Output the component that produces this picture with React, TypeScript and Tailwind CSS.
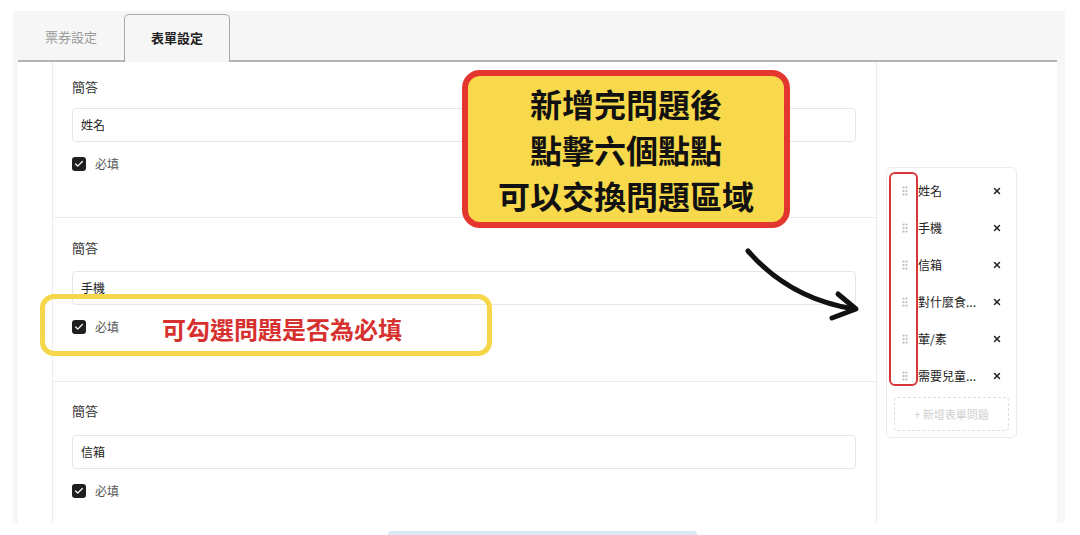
import { Check, GripVertical, X } from "lucide-react";

const QUESTIONS = [
  { label: "姓名", h: "h-[156px]", pt: "pt-[17px]", gap: "mt-[13px]" },
  { label: "手機", h: "h-[164px]", pt: "pt-[22px]", gap: "mt-[15px]" },
  { label: "信箱", h: "h-[164px]", pt: "pt-[21px]", gap: "mt-[16px]" },
];

const ORDER = ["姓名", "手機", "信箱", "對什麼食...", "葷/素", "需要兒童..."];

function QuestionCard({ label, h, pt, gap }: { label: string; h: string; pt: string; gap: string }) {
  return (
    <div className={`${h} shrink-0 border-b border-[#ececec] pl-[19px] pr-[20px] ${pt}`}>
      <p className="h-[16px] text-[13px] leading-[16px] text-[#333]">簡答</p>
      <div
        className={`${gap} flex h-[34px] items-center rounded-[4px] border border-[#e6e6e6] px-[8px] text-[12px] text-[#222]`}
      >
        {label}
      </div>
      <label className="mt-[14px] flex h-[16px] items-center gap-[9px]">
        <span className="flex h-[14px] w-[14px] items-center justify-center rounded-[3px] bg-[#1f1f1f]">
          <Check className="h-[10px] w-[10px] text-white" strokeWidth={3} />
        </span>
        <span className="text-[12px] text-[#555]">必填</span>
      </label>
    </div>
  );
}

export default function App() {
  return (
    <div className="relative h-[535px] w-[1080px] overflow-hidden bg-white pl-[13px] pt-[11px] font-['Noto_Sans_CJK_TC','Noto_Sans',sans-serif]">
      {/* Panel */}
      <div className="flex h-[512px] w-[1052px] flex-col bg-[#f6f6f6] pl-[5px] pr-[8px]">
        {/* Tabs */}
        <div className="flex h-[51px] shrink-0 items-end border-b-2 border-[#b4b4b4]">
          <div className="flex h-[46px] w-[106px] items-center justify-center text-[13px] text-[#9a9a9a]">
            票券設定
          </div>
          <div className="-mb-[2px] flex h-[48px] w-[106px] items-center justify-center rounded-t-[5px] border border-b-0 border-[#a8a8a8] bg-[#f6f6f6] pb-[2px] text-[13px] font-semibold text-[#222]">
            表單設定
          </div>
        </div>

        {/* Content */}
        <div className="flex min-h-0 flex-1 bg-white">
          <div className="w-[34px] shrink-0" />
          <div className="flex w-[825px] shrink-0 flex-col overflow-hidden border-x border-[#ececec]">
            {QUESTIONS.map((q) => (
              <QuestionCard key={q.label} {...q} />
            ))}
          </div>

          {/* Question order list */}
          <div className="flex-1 pl-[9px] pt-[105px]">
            <div className="w-[131px] rounded-[5px] border border-[#ececec] px-[7px] pb-[6px] pt-[4px]">
              {ORDER.map((item) => (
                <div key={item} className="flex h-[37px] items-center">
                  <GripVertical className="ml-[5px] h-[12px] w-[12px] text-[#bdbdbd]" strokeWidth={2.5} />
                  <span className="ml-[7px] flex-1 text-[12px] text-[#222]">{item}</span>
                  <X className="mr-[7px] h-[10px] w-[10px] text-[#222]" strokeWidth={3.5} />
                </div>
              ))}
              <button className="mt-[3px] flex h-[34px] w-full items-center justify-center rounded-[4px] border border-dashed border-[#dedede] text-[11px] text-[#cfcfcf]">
                + 新增表單問題
              </button>
            </div>
          </div>
        </div>
      </div>

      {/* Button peeking below */}
      <div className="ml-[375px] mt-[8px] h-[6px] w-[309px] rounded-t-[3px] bg-[#dde8f7]" />

      {/* Annotations */}
      <div className="absolute left-[462px] top-[70px] flex h-[158px] w-[328px] flex-col items-center justify-center rounded-[18px] border-[6px] border-[#e3362f] bg-[#f8d94b] text-[32px] font-bold leading-[46px] text-[#111]">
        <span>新增完問題後</span>
        <span>點擊六個點點</span>
        <span>可以交換問題區域</span>
      </div>

      <div className="absolute left-[40px] top-[294px] h-[62px] w-[452px] rounded-[14px] border-[5px] border-[#f6d64a]" />
      <span className="absolute left-[162px] top-[312px] text-[24px] font-bold leading-[34px] text-[#d7312f]">
        可勾選問題是否為必填
      </span>

      <div className="absolute left-[889px] top-[172px] h-[214px] w-[29px] rounded-[6px] border-[2.5px] border-[#d8373a]" />

      <svg className="absolute left-0 top-0" width="1080" height="535" viewBox="0 0 1080 535" fill="none">
        <path
          d="M748 251 C 775 282, 810 302, 854 309"
          stroke="#111"
          strokeWidth="5"
          strokeLinecap="round"
        />
        <path
          d="M838 294 L856 309 L832 318"
          stroke="#111"
          strokeWidth="5"
          strokeLinecap="round"
          strokeLinejoin="round"
        />
      </svg>
    </div>
  );
}
